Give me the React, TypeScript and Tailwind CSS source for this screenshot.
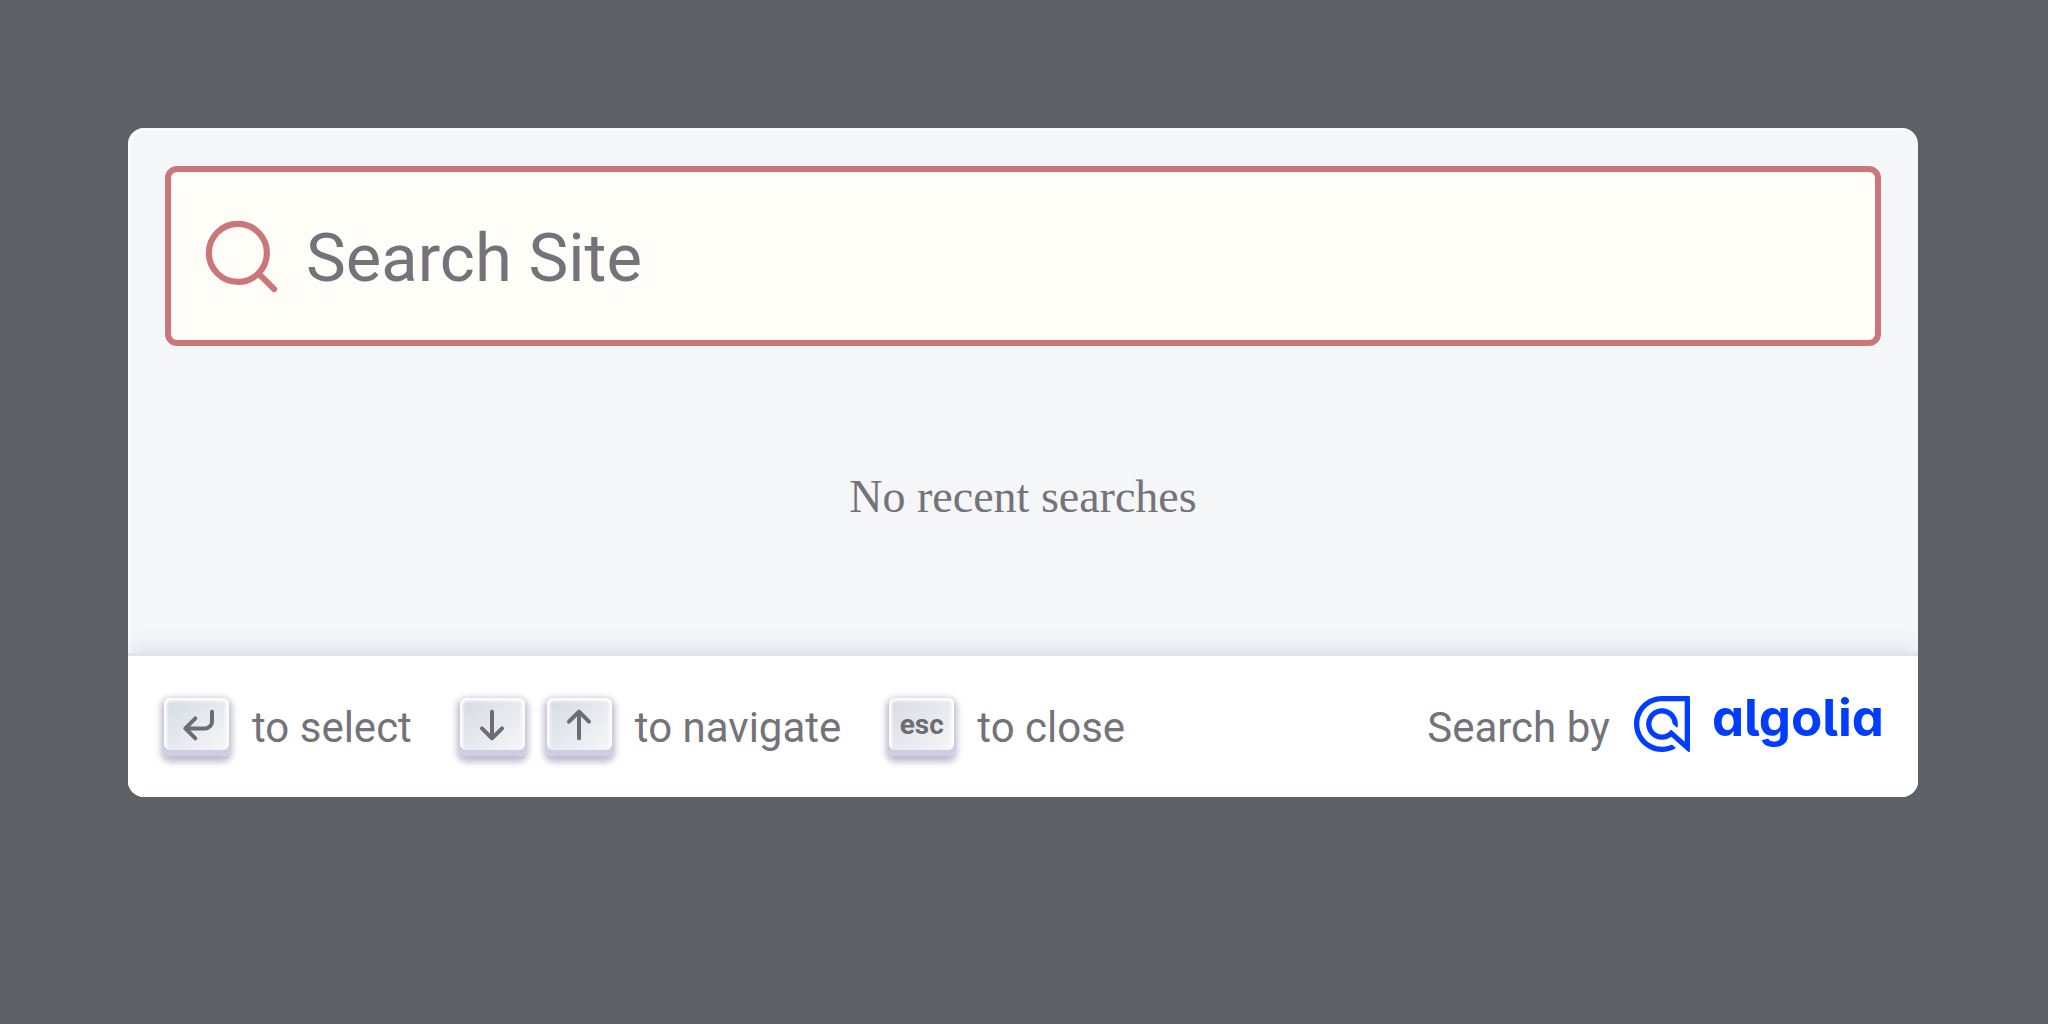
import type { ReactNode } from "react";

function Key({ children }: { children: ReactNode }) {
  return (
    <kbd className="flex h-[58px] w-[65px] shrink-0 items-center justify-center rounded-md bg-linear-to-br from-[#d5dbe4] to-[#f8f8f8] pb-1 font-[Roboto,sans-serif] text-[#6c6c72] shadow-[inset_0_-6px_0_0_#cdcde6,inset_0_0_3px_3px_#fff,0_3px_6px_3px_rgba(30,35,90,0.3)]">
      {children}
    </kbd>
  );
}

function KeyIcon({ label, d }: { label: string; d: string }) {
  return (
    <svg
      className="size-[50px]"
      viewBox="0 0 15 15"
      role="img"
      aria-label={label}
      fill="none"
      stroke="currentColor"
      strokeLinecap="round"
      strokeLinejoin="round"
      strokeWidth="1.2"
    >
      <path d={d} />
    </svg>
  );
}

function SearchIcon() {
  return (
    <svg className="size-[77px] shrink-0" viewBox="0 0 20 20" fill="none" role="img" aria-label="Search Site">
      <path
        d="M14.386 14.386l4.0877 4.0877-4.0877-4.0877c-2.9418 2.9419-7.7115 2.9419-10.6533 0-2.9419-2.9418-2.9419-7.7115 0-10.6533 2.9418-2.9419 7.7115-2.9419 10.6533 0 2.9419 2.9418 2.9419 7.7115 0 10.6533z"
        stroke="#ca777a"
        strokeWidth="1.6"
        strokeLinecap="round"
        strokeLinejoin="round"
      />
    </svg>
  );
}

function AlgoliaMark() {
  return (
    <svg className="size-14 shrink-0" viewBox="0 0 500 500" fill="#003dff" aria-hidden="true">
      <path d="M249.83 0C113.3 0 2 110.09.03 246.16c-2 138.19 110.12 252.7 248.33 253.5 42.68.25 83.79-10.19 120.3-30.03 3.56-1.93 4.11-6.83 1.08-9.51l-23.38-20.72c-4.75-4.21-11.51-5.4-17.36-2.92-25.48 10.84-53.17 16.38-81.71 16.03-111.68-1.37-201.91-94.29-200.13-205.96 1.76-110.26 92-199.41 202.67-199.41h202.69V407.41l-115-102.18c-3.72-3.31-9.42-2.66-12.42 1.31-18.46 24.44-48.53 39.64-81.93 37.34-46.33-3.2-83.87-40.5-87.34-86.81-4.15-55.24 39.63-101.52 94-101.52 49.18 0 89.68 37.85 93.91 85.95.38 4.28 2.31 8.27 5.52 11.12l29.95 26.55c3.4 3.01 8.79 1.17 9.63-3.3 2.16-11.55 2.92-23.58 2.07-35.92-4.82-70.34-61.8-126.93-132.17-131.26-80.68-4.97-148.13 58.14-150.27 137.25-2.09 77.1 61.08 143.56 138.19 145.26 32.19.71 62.03-9.41 86.14-26.95l150.26 133.2c6.44 5.71 16.61 1.14 16.61-7.47V9.48C499.66 4.25 495.42 0 490.18 0H249.83Z" />
    </svg>
  );
}

export default function App() {
  return (
    <div className="min-h-screen bg-[#5d6065] p-32 font-[Roboto,sans-serif] text-[#737379]">
      <div
        role="dialog"
        aria-label="Search"
        className="mr-0.5 overflow-hidden rounded-2xl bg-[#f5f6f8] shadow-[inset_3px_3px_0_0_rgba(255,255,255,0.5)]"
      >
        <header className="px-[37px] pt-[38px]">
          <form
            className="flex h-[180px] items-center gap-6 rounded-xl border-6 border-[#ca777a] bg-[#fefdf8] px-8"
            onSubmit={(event) => event.preventDefault()}
          >
            <label htmlFor="site-search">
              <SearchIcon />
            </label>
            <input
              id="site-search"
              type="search"
              placeholder="Search Site"
              className="h-full min-w-0 flex-1 bg-transparent pt-1 pl-0.5 text-[67px] outline-none placeholder:text-[#737379] placeholder:opacity-100"
            />
          </form>
        </header>

        <main className="flex h-[310px] items-center justify-center pb-2">
          <p className="font-['Liberation_Serif',serif] text-[46px] leading-none">No recent searches</p>
        </main>

        <footer className="flex h-[141px] items-center justify-between bg-white pr-[34px] pl-9 shadow-[0_-3px_0_0_#e0e3e8,0_-9px_18px_0_rgba(69,98,155,0.12)]">
          <ul className="flex items-center gap-12 text-[42px]">
            <li className="flex items-center gap-[23px]">
              <Key>
                <KeyIcon label="Enter key" d="M12 3.53088v3c0 1-1 2-2 2H4M7 11.53088l-3-3 3-3" />
              </Key>
              <span className="pt-0.5">to select</span>
            </li>
            <li className="flex items-center gap-[23px]">
              <span className="flex gap-[22px]">
                <Key>
                  <KeyIcon label="Arrow down" d="M7.5 3.5v8M10.5 8.5l-3 3-3-3" />
                </Key>
                <Key>
                  <KeyIcon label="Arrow up" d="M7.5 11.5v-8M10.5 6.5l-3-3-3 3" />
                </Key>
              </span>
              <span className="pt-0.5">to navigate</span>
            </li>
            <li className="flex items-center gap-[23px]">
              <Key>
                <span className="text-[28px] leading-none font-bold">esc</span>
              </Key>
              <span className="pt-0.5">to close</span>
            </li>
          </ul>
          <a href="#algolia" className="flex items-center gap-6 text-[42px]">
            <span className="pt-0.5">Search by</span>
            <span className="flex items-center gap-[22px] pb-1.5">
              <AlgoliaMark />
              <span className="pb-3 font-[Inter,sans-serif] text-[51px] leading-none font-bold text-[#003dff] [font-feature-settings:'cv11','cv05']">
                algolia
              </span>
            </span>
          </a>
        </footer>
      </div>
    </div>
  );
}
